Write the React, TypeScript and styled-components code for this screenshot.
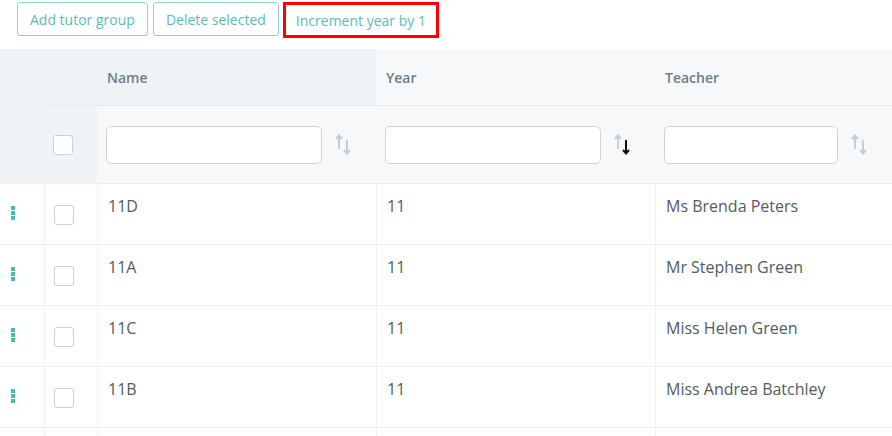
import styled, { createGlobalStyle } from "styled-components";

const GlobalStyle = createGlobalStyle`
    body {
        margin: 0;
        background: #ffffff;
        font-family: "Open Sans", "Liberation Sans", sans-serif;
    }
`;

const Page = styled.div`
    width: 892px;
    height: 436px;
    overflow: hidden;
`;

const Toolbar = styled.div`
    display: flex;
    align-items: flex-start;
    gap: 5px;
    padding: 2px 0 0 17px;
    height: 49px;
    box-sizing: border-box;
`;

const ToolButton = styled.button<{ $marked?: boolean }>`
    height: ${props => props.$marked ? "36px" : "34px"};
    padding: 0 ${props => props.$marked ? "10px" : "12px"};
    margin-left: ${props => props.$marked ? "-1px" : "0"};
    background: #ffffff;
    border: ${props => props.$marked ? "3px solid #ff0000" : "1px solid #8fd2cb"};
    border-radius: ${props => props.$marked ? "0" : "3px"};
    color: #5cbcb3;
    font-family: "Open Sans", sans-serif;
    font-size: 14px;
`;

const Grid = styled.div`
    display: grid;
    grid-template-columns: 44px 53px 279px 279px 1fr;
`;

const HandleHead = styled.div`
    grid-row: span 2;
    background: #f0f3f5;
`;

const HeadCell = styled.div<{ $tone: "dark" | "light" }>`
    height: 57px;
    box-sizing: border-box;
    background: ${props => props.$tone === "dark" ? "#f0f3f5" : "#f7f8f9"};
    border-bottom: 1px solid #e4e9ec;
    display: flex;
    align-items: center;
    padding: 0 0 0 10px;
    color: #6b7e8a;
    font-size: 14px;
    font-weight: 600;
`;

const FilterCell = styled.div<{ $tone: "dark" | "light" }>`
    height: 78px;
    background: ${props => props.$tone === "dark" ? "#f0f3f5" : "#f7f8f9"};
    border-bottom: 1px solid #e9edf0;
    display: flex;
    align-items: center;
    padding-left: 9px;
    gap: 13px;
    box-sizing: border-box;
`;

const FilterInput = styled.input<{ $w: number }>`
    width: ${props => props.$w}px;
    height: 38px;
    box-sizing: border-box;
    border: 1px solid #cfd4d8;
    border-radius: 5px;
    background: #ffffff;
`;

const Check = styled.span`
    display: inline-block;
    width: 20px;
    height: 20px;
    box-sizing: border-box;
    border: 1px solid #cdd1d4;
    border-radius: 3px;
    background: #ffffff;
`;

const Cell = styled.div<{ $first?: boolean }>`
    height: 61px;
    box-sizing: border-box;
    border-bottom: 1px solid #eaeef0;
    border-left: ${props => props.$first ? "none" : "1px solid #eef1f3"};
    padding: 11px 10px 0 10px;
    color: #555b60;
    font-size: 16px;
`;

const HandleCell = styled(Cell)`
    padding: 22px 0 0 11px;
`;

const CheckCell = styled(Cell)`
    padding: 21px 0 0 9px;
`;

const Dots = styled.span`
    display: flex;
    flex-direction: column;
    gap: 1px;
    span {
        width: 4px;
        height: 4px;
        background: #47bdb3;
    }
`;

function SortIcon({ active }: { active?: boolean }) {
    const idle = "#c5ced5";
    return (
        <svg width="18" height="24" viewBox="0 0 18 24">
            <path d="M4 16 V3 M1 6 L4 2.5 L7 6" stroke={idle} strokeWidth="2" fill="none" />
            <path d="M12 7 V20 M9 17 L12 20.5 L15 17" stroke={active ? "#111111" : idle} strokeWidth="2" fill="none" />
        </svg>
    );
}

const rows = [
    { name: "11D", year: "11", teacher: "Ms Brenda Peters" },
    { name: "11A", year: "11", teacher: "Mr Stephen Green" },
    { name: "11C", year: "11", teacher: "Miss Helen Green" },
    { name: "11B", year: "11", teacher: "Miss Andrea Batchley" },
    { name: "", year: "", teacher: "" },
];

function App() {
    return (
        <Page>
            <GlobalStyle />
            <Toolbar>
                <ToolButton>Add tutor group</ToolButton>
                <ToolButton>Delete selected</ToolButton>
                <ToolButton $marked>Increment year by 1</ToolButton>
            </Toolbar>
            <Grid>
                <HandleHead />
                <HeadCell $tone="dark" />
                <HeadCell $tone="dark">Name</HeadCell>
                <HeadCell $tone="light">Year</HeadCell>
                <HeadCell $tone="light">Teacher</HeadCell>

                <FilterCell $tone="dark"><Check /></FilterCell>
                <FilterCell $tone="light">
                    <FilterInput $w={216} />
                    <SortIcon />
                </FilterCell>
                <FilterCell $tone="light">
                    <FilterInput $w={216} />
                    <SortIcon active />
                </FilterCell>
                <FilterCell $tone="light">
                    <FilterInput $w={174} />
                    <SortIcon />
                </FilterCell>

                {rows.map((row, i) => (
                    <>
                        <HandleCell key={`h${i}`} $first>
                            <Dots><span /><span /><span /></Dots>
                        </HandleCell>
                        <CheckCell key={`c${i}`}><Check /></CheckCell>
                        <Cell key={`n${i}`}>{row.name}</Cell>
                        <Cell key={`y${i}`}>{row.year}</Cell>
                        <Cell key={`t${i}`}>{row.teacher}</Cell>
                    </>
                ))}
            </Grid>
        </Page>
    );
}

export default App;
